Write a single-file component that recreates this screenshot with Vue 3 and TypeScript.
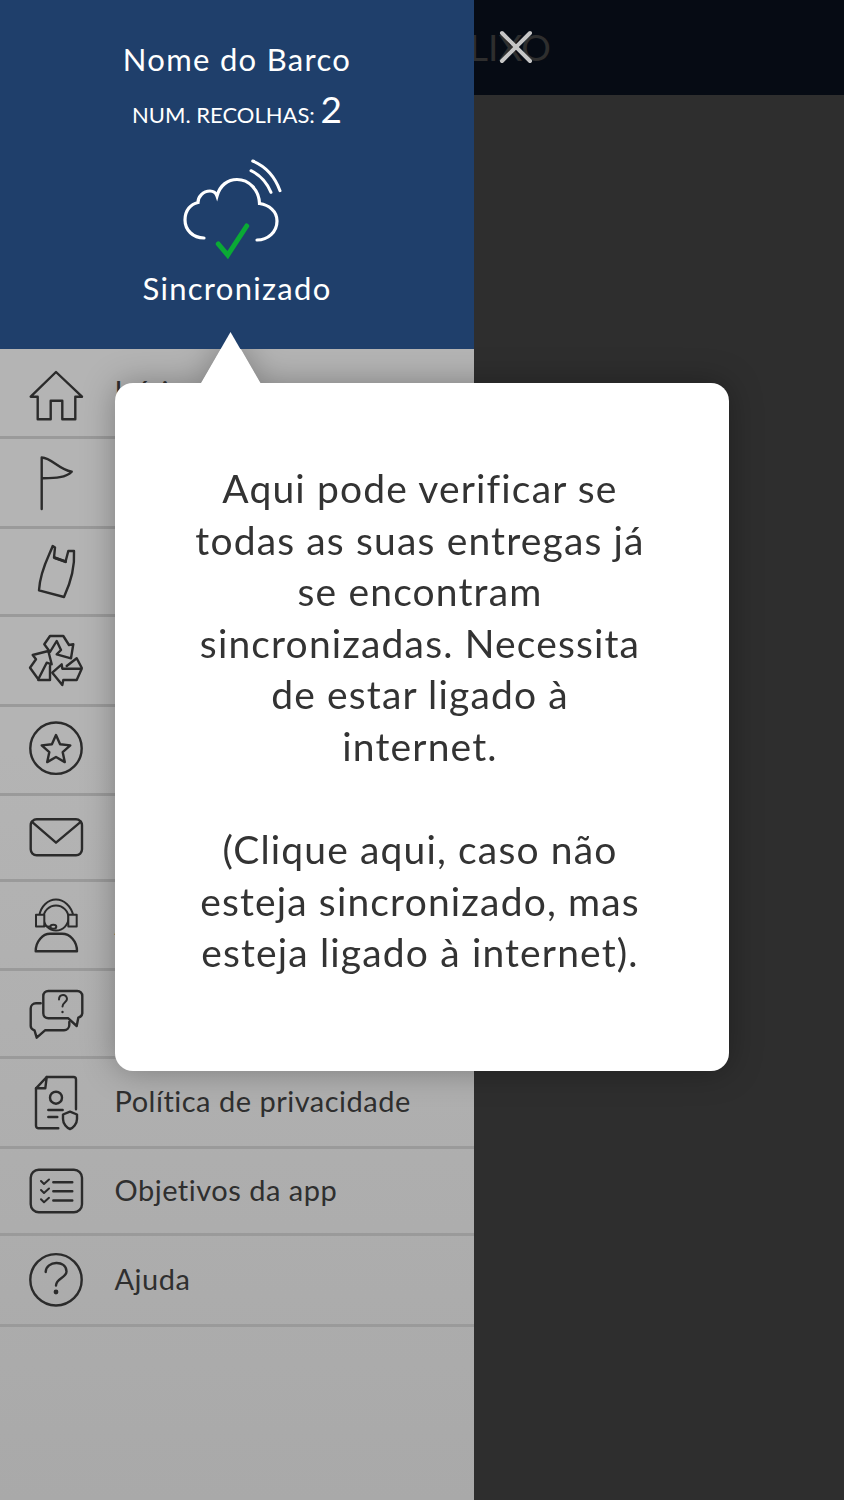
<script setup lang="ts">
interface MenuItem {
	id: string
	label: string
	height: number
}

// rows 2-6 and 8 sit fully behind the tooltip, so they have no readable label
const menu: MenuItem[] = [
	{ id: 'home', label: 'Início', height: 90 },
	{ id: 'flag', label: '', height: 90 },
	{ id: 'bag', label: '', height: 88 },
	{ id: 'recycle', label: '', height: 90 },
	{ id: 'star', label: '', height: 89 },
	{ id: 'mail', label: '', height: 86 },
	{ id: 'agent', label: 'Apoio', height: 89 },
	{ id: 'chat', label: '', height: 88 },
	{ id: 'policy', label: 'Política de privacidade', height: 90 },
	{ id: 'list', label: 'Objetivos da app', height: 87 },
	{ id: 'help', label: 'Ajuda', height: 91 },
]
</script>

<template>
	<div class="page">
		<div class="topbar">
			<span class="page-title">LIXO</span>
		</div>

		<aside class="drawer">
			<header class="head">
				<div class="boat">Nome do Barco</div>
				<div class="count">NUM. RECOLHAS: <b>2</b></div>
				<svg class="cloud" width="140" height="120" viewBox="0 0 140 120" fill="none" stroke-linecap="round">
					<path d="M44 88C33 88 25 80 25 70C25 60 31 54 38 52.5C38 47 43 41 50 41C53 41 56 43 57 46C60 35 68 29.5 77 29.5C89 29.5 99 40 99.5 53.5C109 55 117 61 117 71C117 82 108 90 97 90" stroke="#fff" stroke-width="3.2" />
					<path d="M92.7 11C105 16 115 27 120 40.7M91 20.7C100 25 107 33 111 42.3" stroke="#fff" stroke-width="3" />
					<path d="M58.3 94L67.7 105L86.7 76" stroke="#0aaa35" stroke-width="5" />
				</svg>
				<div class="sync">Sincronizado</div>
			</header>

			<nav class="menu">
				<a
					v-for="item in menu"
					:key="item.id"
					class="row"
					:style="{ height: item.height + 'px' }"
				>
					<svg class="icon" width="60" height="60" viewBox="0 0 60 60" fill="none" stroke="#2b2b2b" stroke-width="2.4" stroke-linejoin="round" stroke-linecap="round">
						<template v-if="item.id === 'home'">
							<path d="M30 9L4.7 33.7H11.7V56.3H24.7V37.7H36.3V56.3H49.3V33.7H56Z" />
						</template>
						<template v-else-if="item.id === 'flag'">
							<path d="M15.7 56V4.5C26 5 32 16 45.7 18.7C40 25 28 25 15.7 25.3" />
						</template>
						<template v-else-if="item.id === 'bag'">
							<path d="M26.7 4C24 12 14 28 13 48.3L38 55C44 42 49 25 48 9L42.3 9L39.5 19.7L28 15.5L29 5.5Z" />
							<path d="M29 15.9L39.5 19.7" stroke-width="3" />
						</template>
						<template v-else-if="item.id === 'recycle'">
							<path d="M24 5H37.3L43 14L47.3 13.3L45 27.3L30.7 23.3L35 19L30.7 10L24 21L18.3 13.3Z" />
							<path d="M6.7 24L22.3 20L25.7 33.3L20.7 31.7L12.3 48.3L4 36.7L10 28.3Z" />
							<path d="M12.3 49H24V35" />
							<path d="M26.3 41.7L35.7 33.3L36.3 37.7H55.7L50.7 49H37.3L36.3 54Z" />
							<path d="M40.7 35L50.7 27.3L55.7 36.7" />
						</template>
						<template v-else-if="item.id === 'star'">
							<circle cx="30" cy="28.2" r="25.7" />
							<path d="M30 15L34.1 24.3L44.3 25.4L36.7 32.2L38.8 42.1L30 37L21.2 42.1L23.3 32.2L15.7 25.4L25.9 24.3Z" />
						</template>
						<template v-else-if="item.id === 'mail'">
							<rect x="4.7" y="11.3" width="51.3" height="36" rx="6" />
							<path d="M5.7 13.7L30 34.7L55 13.7" />
						</template>
						<template v-else-if="item.id === 'agent'">
							<circle cx="30" cy="23" r="12.5" stroke-width="2" />
							<path d="M13.3 20.5C15 11 22 4.5 30 4.5C38 4.5 45 11 47.3 20.5" stroke-width="2" />
							<rect x="10" y="19.8" width="8.3" height="11.7" stroke-width="2" fill="#b2b2b2" />
							<rect x="42.3" y="19.8" width="8.4" height="11.7" stroke-width="2" fill="#b2b2b2" />
							<ellipse cx="27.3" cy="31.8" rx="3" ry="2" stroke-width="2" />
							<path d="M18.5 30.5C20 31.5 22 31.8 24.3 31.8" stroke-width="2" />
							<path d="M9.7 56.2C9.7 46 17 38.8 24 38.8H36C44 38.8 51 46 51 56.2Z" />
						</template>
						<template v-else-if="item.id === 'chat'">
							<path d="M22.3 7H51.3A5 5 0 0 1 56.3 12V29.3A5 5 0 0 1 52.3 33.7L50.7 42L42.3 34.3H22.3A5 5 0 0 1 17.3 29.3V12A5 5 0 0 1 22.3 7Z" />
							<path d="M14.7 19.3H10A5.3 5.3 0 0 0 4.7 24.6V42C4.7 44 6 45.5 8.5 46.3L10.7 53.7L19 46.3H38A5.3 5.3 0 0 0 43.3 41V38" />
							<path d="M33 15.5C33 9.5 41 9.5 41 15C41 18 36.5 18.5 36.5 22.5" stroke-width="2" />
							<path d="M36.5 28V28.1" />
						</template>
						<template v-else-if="item.id === 'policy'">
							<path d="M50 36.3V6.5A2.5 2.5 0 0 0 47.5 4H20.7L10 15.3V52.8A2.5 2.5 0 0 0 12.5 55.3H32.3" />
							<path d="M10 15.3H19.3L20.7 4" />
							<circle cx="30" cy="24.7" r="6" />
							<path d="M22.3 37H36.7M22.3 44H31.3" />
							<path d="M44 38.7L51 41.5V46C51 51 47 55 44 56C41 55 37 51 37 46V41.5Z" />
						</template>
						<template v-else-if="item.id === 'list'">
							<rect x="4.7" y="8.8" width="51.3" height="42.4" rx="8" />
							<path d="M27.3 21.2H46.3M27.3 30.2H46.3M27.3 39.5H46.3" />
							<path d="M15 20L18 23L23 18.5M15 29L18 32L23 27.5M15 38.3L18 41.3L23 36.8" stroke-width="2" />
						</template>
						<template v-else>
							<circle cx="30" cy="29.8" r="25.7" />
							<path d="M19.7 22C20 10.5 40.5 9.5 40.5 21.5C40.5 28 30 28 30 35.5" />
							<circle cx="30" cy="42" r="1.2" fill="#2b2b2b" />
						</template>
					</svg>
					<span class="label">{{ item.label }}</span>
				</a>
			</nav>
		</aside>

		<button class="close" aria-label="Fechar">
			<svg width="34" height="34" viewBox="0 0 34 34" stroke="#c6c6c6" stroke-width="4" stroke-linecap="round">
				<path d="M3 3L31 31M31 3L3 31" />
			</svg>
		</button>

		<!-- tooltip: shadowed arrow sits under the header, clean copy over it -->
		<div class="tip">
			<div class="tip-arrow tip-arrow--shadow"></div>
			<div class="tip-box">
				<p>Aqui pode verificar se<br>todas as suas entregas já<br>se encontram<br>sincronizadas. Necessita<br>de estar ligado à<br>internet.</p>
				<p>(Clique aqui, caso não<br>esteja sincronizado, mas<br>esteja ligado à internet).</p>
			</div>
		</div>
		<div class="tip-arrow tip-arrow--top"></div>
	</div>
</template>

<style scoped>
.page {
	position: relative;
	width: 844px;
	height: 1500px;
	overflow: hidden;
	background: #2e2e2e;
	font-family: Lato, "Noto Sans", sans-serif;
}

.topbar {
	height: 95px;
	background: #060b14;
	padding-left: 469px;
	padding-bottom: 2px;
	box-sizing: border-box;
	display: flex;
	align-items: center;
}

.page-title {
	color: #2e2e2e;
	font-size: 37px;
}

.drawer {
	position: absolute;
	left: 0;
	top: 0;
	bottom: 0;
	width: 474px;
	display: flex;
	flex-direction: column;
	background: linear-gradient(#b4b4b4 50%, #a9a9a9);
}

.head {
	position: relative;
	z-index: 2;
	height: 349px;
	padding-top: 40px;
	box-sizing: border-box;
	background: #1f3f6b;
	color: #fff;
	display: flex;
	flex-direction: column;
	align-items: center;
}

.boat,
.sync {
	font-size: 31px;
	line-height: 40px;
	letter-spacing: 1.3px;
}

.boat {
	margin-top: -1px;
}

.count {
	margin-top: 10px;
	height: 40px;
	line-height: 40px;
	font-size: 22px;
	letter-spacing: 0;
}

.count b {
	font-size: 37px;
	font-weight: 400;
}

.cloud {
	align-self: flex-start;
	margin: 21px 0 0 160px;
}

.sync {
	margin-top: -2px;
}

.row {
	display: flex;
	align-items: center;
	box-sizing: border-box;
	padding-left: 26px;
	border-bottom: 3px solid #9a9a9a;
}

.icon {
	flex: none;
}

.label {
	margin: 0 0 4px 28.5px;
	font-size: 29px;
	letter-spacing: 0.5px;
	color: #2f2f2f;
}

.close {
	position: absolute;
	left: 499px;
	top: 30px;
	padding: 0;
	border: 0;
	background: none;
	line-height: 0;
}

.tip {
	position: absolute;
	left: 115px;
	top: 332px;
	width: 614px;
	filter: drop-shadow(0 0 16px rgba(0, 0, 0, 0.3));
}

.tip-arrow {
	width: 60px;
	height: 52px;
	background: #fff;
	clip-path: polygon(50% 0, 100% 100%, 0 100%);
}

.tip-arrow--shadow {
	margin-left: 86px;
}

.tip-arrow--top {
	position: absolute;
	left: 200.5px;
	top: 332px;
	z-index: 3;
}

.tip-box {
	margin-top: -1px;
	height: 688px;
	box-sizing: border-box;
	padding: 80px 4px 0 0;
	border-radius: 18px;
	background: #fff;
	text-align: center;
	color: #333;
	font-size: 39px;
	line-height: 51.6px;
	letter-spacing: 1.15px;
}

.tip-box p {
	margin: 0 0 51.6px;
}
</style>
